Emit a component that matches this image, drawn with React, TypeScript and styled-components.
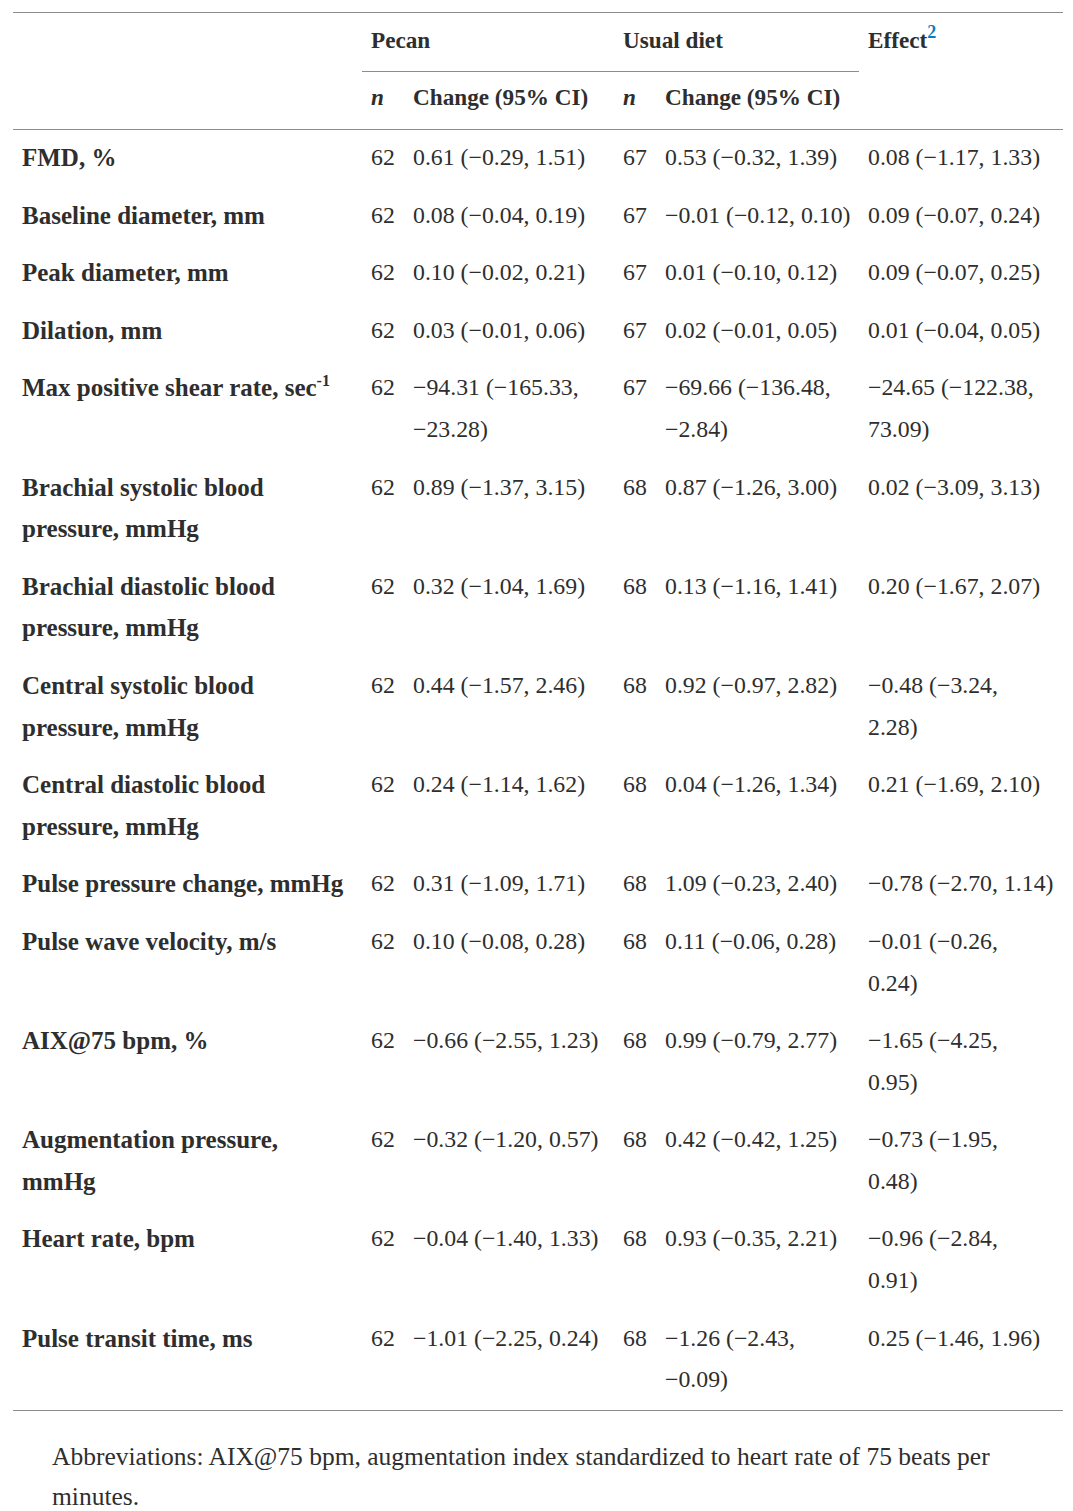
import React from "react";
import styled, { createGlobalStyle } from "styled-components";

const Global = createGlobalStyle`
  html, body { margin: 0; padding: 0; background: #ffffff; }
  body { font-family: "Liberation Serif", "Times New Roman", serif; color: #2e2e2e; }
`;

const Page = styled.div`
  padding: 12px 10px 0 13px;
`;

const Table = styled.table`
  width: 1050px;
  border-collapse: collapse;
  table-layout: fixed;
  border-top: 1px solid #8c8c8c;
  border-bottom: 1px solid #8c8c8c;
`;

const HeadCell = styled.th<{ $group?: boolean }>`
  text-align: left;
  vertical-align: top;
  font-weight: 700;
  font-size: 23.2px;
  line-height: 41.5px;
  padding: 7px 9px 9px 9px;
  white-space: pre;
  border-bottom: ${(p) => (p.$group ? "1px solid #8c8c8c" : "none")};
`;

const HeadRow = styled.tr<{ $last?: boolean }>`
  border-bottom: ${(p) => (p.$last ? "1px solid #8c8c8c" : "none")};
`;

const SubHeadCell = styled(HeadCell)`
  padding: 5px 9px 11px 9px;
`;

const Italic = styled.span`
  font-style: italic;
`;

const RefSup = styled.sup`
  color: #0c7dbb;
  font-size: 18px;
  font-weight: 700;
  line-height: 0;
  vertical-align: 10px;
`;

const LabelSup = styled.sup`
  font-size: 16px;
  line-height: 0;
  vertical-align: 10px;
`;

const Label = styled.th`
  text-align: left;
  vertical-align: top;
  font-weight: 700;
  font-size: 25px;
  line-height: 41.6px;
  padding: 7px 9px 9px 9px;
  white-space: pre;
`;

const Cell = styled.td`
  text-align: left;
  vertical-align: top;
  font-size: 23.8px;
  line-height: 41.6px;
  padding: 7px 9px 9px 9px;
  white-space: pre;
`;

const Note = styled.p`
  margin: 26px 0 0 0;
  padding-left: 39px;
  font-size: 25.5px;
  line-height: 40px;
`;

type Row = {
  label: React.ReactNode;
  pn: string;
  pc: string;
  un: string;
  uc: string;
  eff: string;
};

const rows: Row[] = [
  { label: "FMD, %", pn: "62", pc: "0.61 (−0.29, 1.51)", un: "67", uc: "0.53 (−0.32, 1.39)", eff: "0.08 (−1.17, 1.33)" },
  { label: "Baseline diameter, mm", pn: "62", pc: "0.08 (−0.04, 0.19)", un: "67", uc: "−0.01 (−0.12, 0.10)", eff: "0.09 (−0.07, 0.24)" },
  { label: "Peak diameter, mm", pn: "62", pc: "0.10 (−0.02, 0.21)", un: "67", uc: "0.01 (−0.10, 0.12)", eff: "0.09 (−0.07, 0.25)" },
  { label: "Dilation, mm", pn: "62", pc: "0.03 (−0.01, 0.06)", un: "67", uc: "0.02 (−0.01, 0.05)", eff: "0.01 (−0.04, 0.05)" },
  {
    label: (
      <>
        Max positive shear rate, sec<LabelSup>-1</LabelSup>
      </>
    ),
    pn: "62",
    pc: "−94.31 (−165.33,\n−23.28)",
    un: "67",
    uc: "−69.66 (−136.48,\n−2.84)",
    eff: "−24.65 (−122.38,\n73.09)",
  },
  { label: "Brachial systolic blood\npressure, mmHg", pn: "62", pc: "0.89 (−1.37, 3.15)", un: "68", uc: "0.87 (−1.26, 3.00)", eff: "0.02 (−3.09, 3.13)" },
  { label: "Brachial diastolic blood\npressure, mmHg", pn: "62", pc: "0.32 (−1.04, 1.69)", un: "68", uc: "0.13 (−1.16, 1.41)", eff: "0.20 (−1.67, 2.07)" },
  { label: "Central systolic blood\npressure, mmHg", pn: "62", pc: "0.44 (−1.57, 2.46)", un: "68", uc: "0.92 (−0.97, 2.82)", eff: "−0.48 (−3.24,\n2.28)" },
  { label: "Central diastolic blood\npressure, mmHg", pn: "62", pc: "0.24 (−1.14, 1.62)", un: "68", uc: "0.04 (−1.26, 1.34)", eff: "0.21 (−1.69, 2.10)" },
  { label: "Pulse pressure change, mmHg", pn: "62", pc: "0.31 (−1.09, 1.71)", un: "68", uc: "1.09 (−0.23, 2.40)", eff: "−0.78 (−2.70, 1.14)" },
  { label: "Pulse wave velocity, m/s", pn: "62", pc: "0.10 (−0.08, 0.28)", un: "68", uc: "0.11 (−0.06, 0.28)", eff: "−0.01 (−0.26,\n0.24)" },
  { label: "AIX@75 bpm, %", pn: "62", pc: "−0.66 (−2.55, 1.23)", un: "68", uc: "0.99 (−0.79, 2.77)", eff: "−1.65 (−4.25,\n0.95)" },
  { label: "Augmentation pressure,\nmmHg", pn: "62", pc: "−0.32 (−1.20, 0.57)", un: "68", uc: "0.42 (−0.42, 1.25)", eff: "−0.73 (−1.95,\n0.48)" },
  { label: "Heart rate, bpm", pn: "62", pc: "−0.04 (−1.40, 1.33)", un: "68", uc: "0.93 (−0.35, 2.21)", eff: "−0.96 (−2.84,\n0.91)" },
  { label: "Pulse transit time, ms", pn: "62", pc: "−1.01 (−2.25, 0.24)", un: "68", uc: "−1.26 (−2.43,\n−0.09)", eff: "0.25 (−1.46, 1.96)" },
];

export default function App() {
  return (
    <Page>
      <Global />
      <Table>
        <colgroup>
          <col style={{ width: 349 }} />
          <col style={{ width: 42 }} />
          <col style={{ width: 210 }} />
          <col style={{ width: 42 }} />
          <col style={{ width: 203 }} />
          <col style={{ width: 204 }} />
        </colgroup>
        <thead>
          <HeadRow>
            <HeadCell rowSpan={2} />
            <HeadCell colSpan={2} $group>
              Pecan
            </HeadCell>
            <HeadCell colSpan={2} $group>
              Usual diet
            </HeadCell>
            <HeadCell rowSpan={2}>
              Effect<RefSup>2</RefSup>
            </HeadCell>
          </HeadRow>
          <HeadRow $last>
            <SubHeadCell>
              <Italic>n</Italic>
            </SubHeadCell>
            <SubHeadCell>Change (95% CI)</SubHeadCell>
            <SubHeadCell>
              <Italic>n</Italic>
            </SubHeadCell>
            <SubHeadCell>Change (95% CI)</SubHeadCell>
          </HeadRow>
        </thead>
        <tbody>
          {rows.map((r, i) => (
            <tr key={i}>
              <Label scope="row">{r.label}</Label>
              <Cell>{r.pn}</Cell>
              <Cell>{r.pc}</Cell>
              <Cell>{r.un}</Cell>
              <Cell>{r.uc}</Cell>
              <Cell>{r.eff}</Cell>
            </tr>
          ))}
        </tbody>
      </Table>
      <Note>
        Abbreviations: AIX@75 bpm, augmentation index standardized to heart rate of 75 beats per minutes.
      </Note>
    </Page>
  );
}
